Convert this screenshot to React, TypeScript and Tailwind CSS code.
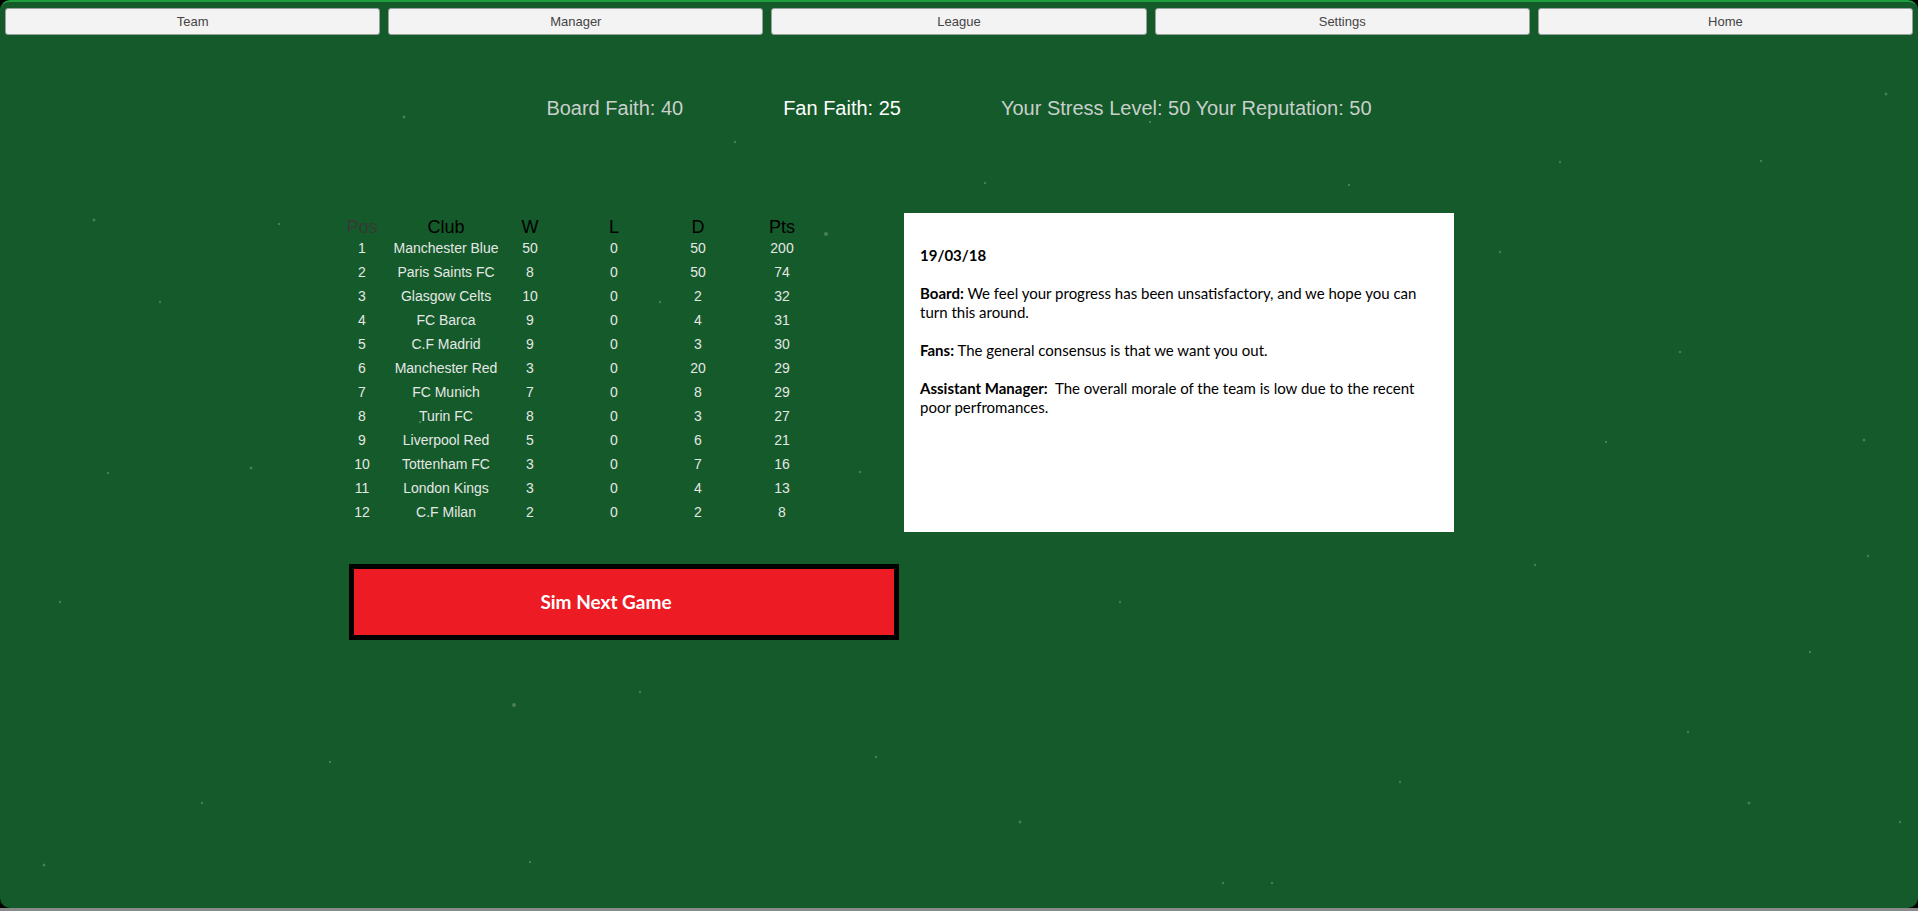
import React from "react";

const NAV = ["Team", "Manager", "League", "Settings", "Home"];

type Row = [number, string, number, number, number, number];

const TABLE: Row[] = [
  [1, "Manchester Blue", 50, 0, 50, 200],
  [2, "Paris Saints FC", 8, 0, 50, 74],
  [3, "Glasgow Celts", 10, 0, 2, 32],
  [4, "FC Barca", 9, 0, 4, 31],
  [5, "C.F Madrid", 9, 0, 3, 30],
  [6, "Manchester Red", 3, 0, 20, 29],
  [7, "FC Munich", 7, 0, 8, 29],
  [8, "Turin FC", 8, 0, 3, 27],
  [9, "Liverpool Red", 5, 0, 6, 21],
  [10, "Tottenham FC", 3, 0, 7, 16],
  [11, "London Kings", 3, 0, 4, 13],
  [12, "C.F Milan", 2, 0, 2, 8],
];

// faint specks over the pitch background (reduced-screenshot coords * 1.223)
const SPECKS: [number, number, number][] = [
  [94, 218, 1.5], [279, 222, 1.2], [404, 115, 1.5], [826, 232, 2], [985, 181, 1.2],
  [1349, 183, 1.2], [1886, 92, 1.5], [1761, 159, 1.2], [251, 466, 1.5], [108, 471, 1.2],
  [514, 703, 2], [876, 755, 1.2], [1688, 730, 1.2], [1749, 801, 1.5], [1606, 440, 1.2],
  [1864, 438, 1.5], [1868, 554, 1.2], [1535, 563, 1.2], [44, 863, 1.5], [202, 801, 1.2],
  [1272, 881, 1.2], [1223, 881, 1.2], [660, 300, 1.2], [1150, 120, 1.2], [1500, 250, 1.2],
  [60, 600, 1.2], [330, 760, 1.2], [1020, 820, 1.5], [1810, 650, 1.2], [1680, 350, 1.2],
  [735, 140, 1.2], [530, 860, 1.2], [1400, 780, 1.2], [860, 470, 1.2], [160, 300, 1.2],
  [1120, 600, 1.2], [1900, 820, 1.2], [640, 690, 1.2], [1560, 160, 1.2], [420, 420, 1.2],
];

function StatsLine() {
  return (
    <div className="mt-[61px] flex h-[24px] items-center justify-center gap-[100px] text-[20px] leading-[24px]">
      <span className="text-[#c9cfca]">Board Faith: 40</span>
      <span className="text-white">Fan Faith: 25</span>
      <span className="text-[#c9cfca]">Your Stress Level: 50 Your Reputation: 50</span>
    </div>
  );
}

function LeagueTable() {
  return (
    <div className="w-[504px] pt-[5px]">
      <div className="grid h-[18px] grid-cols-[repeat(6,84px)] items-center text-[18px] leading-[18px] text-black">
        {["Pos", "Club", "W", "L", "D", "Pts"].map((h, i) => (
          <span key={h} className={`flex justify-center whitespace-nowrap ${i === 0 ? "text-[#343a36]" : ""}`}>
            {h}
          </span>
        ))}
      </div>
      {TABLE.map((r) => (
        <div
          key={r[0]}
          className="grid h-[24px] grid-cols-[repeat(6,84px)] items-center text-[14px] text-[#e4e8e5]"
        >
          {r.map((c, i) => (
            <span key={i} className="flex justify-center whitespace-nowrap">
              {c}
            </span>
          ))}
        </div>
      ))}
    </div>
  );
}

function MessageBox() {
  return (
    <div className="h-[319px] w-[550px] bg-white px-[16px] pt-[33px] font-['Lato',sans-serif] text-[15px] leading-[19px] text-black">
      <p className="font-bold">19/03/18</p>
      <br />
      <p>
        <b>Board:</b> We feel your progress has been unsatisfactory, and we hope you can turn this around.
      </p>
      <br />
      <p>
        <b>Fans:</b> The general consensus is that we want you out.
      </p>
      <br />
      <p>
        <b>Assistant Manager:</b>&nbsp; The overall morale of the team is low due to the recent poor perfromances.
      </p>
    </div>
  );
}

export default function App() {
  return (
    <div className="relative h-[911px] w-full overflow-hidden bg-black font-['Liberation_Sans',Arial,sans-serif]">
      <div className="relative h-[908px] overflow-hidden rounded-[10px] border-t-[2px] border-[#1e9c3e] bg-[#145a2a]">
        <svg className="pointer-events-none absolute inset-0" width="1918" height="908">
          {SPECKS.map(([x, y, r], i) => (
            <circle key={i} cx={x} cy={y} r={r} fill="#ffffff" opacity={0.22} />
          ))}
        </svg>

        <div className="relative">
          <nav className="flex gap-[8px] px-[5px] pt-[6px]">
            {NAV.map((n) => (
              <button
                key={n}
                className="h-[27px] flex-1 rounded-[3px] border border-[#9aa19c] bg-[#f3f3f3] text-[13px] text-[#444]"
              >
                {n}
              </button>
            ))}
          </nav>

          <StatsLine />

          <div className="mt-[93px] flex items-start pl-[320px]">
            <div className="w-[584px]">
              <LeagueTable />
              <button className="ml-[29px] mt-[40px] flex h-[76px] w-[550px] items-center justify-center border-[5px] border-black bg-[#ed1c24] pr-[36px] font-['Lato',sans-serif] text-[19px] font-bold text-white">
                Sim Next Game
              </button>
            </div>
            <MessageBox />
          </div>
        </div>
      </div>
      <div className="h-[3px] bg-[#8a8a8a]" />
    </div>
  );
}
